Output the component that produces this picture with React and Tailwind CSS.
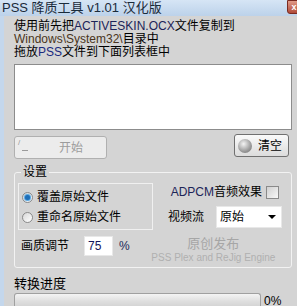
import React from 'react';

const font = { fontFamily: '"Liberation Sans", "Noto Sans CJK SC", sans-serif' };

function Radio({ checked, label }) {
  return (
    <div className="flex items-center h-[20px]">
      <span className="w-[11px] h-[11px] rounded-full border border-[#8a8a8a] bg-gradient-to-br from-[#d8d8d8] to-[#ffffff] flex items-center justify-center">
        {checked && <span className="w-[5px] h-[5px] rounded-full bg-[#1f6fb8] shadow-[0_0_1px_1px_#4aa0e0]" />}
      </span>
      <span className="ml-[4px] text-[12px] leading-[14px]">{label}</span>
    </div>
  );
}

export default function App() {
  return (
    <div className="w-[297px] h-[306px] overflow-hidden bg-[#d4d4d4] text-black" style={font}>
      {/* title bar */}
      <div className="h-[16px] flex items-start bg-gradient-to-b from-[#d6e5f5] to-[#bcd2ea] relative">
        <span className="ml-[2px] text-[13px] leading-[15px] text-[#1a2a3a] whitespace-nowrap">PSS 降质工具 v1.01 汉化版</span>
        <div className="absolute right-[-4px] top-0 w-[14px] h-[14px] bg-gradient-to-b from-[#e09a88] to-[#b04a38] border border-[#7a2a20] rounded-bl-[3px] flex items-center justify-center">
          <span className="text-white text-[9px] leading-none font-bold">x</span>
        </div>
      </div>

      <div className="flex h-[290px]">
        <div className="w-[4px] bg-[#c4d7ec]" />
        <div className="flex-1 pl-[10px] pr-[5px]">
          {/* instructions */}
          <div className="mt-[4px] text-[12px] leading-[13px] whitespace-nowrap">
            <div>使用前先把<span className="text-[#1c2458]">ACTIVESKIN.OCX</span>文件复制到</div>
            <div><span className="text-[#4a3420]">Windows\System32\</span>目录中</div>
            <div>拖放<span className="text-[#1a2a80]">PSS</span>文件到下面列表框中</div>
          </div>

          {/* list box */}
          <div className="mt-[5px] h-[66px] bg-white border border-[#8c8c8c]" />

          {/* buttons */}
          <div className="flex justify-between mt-[4px] pr-[3px]">
            <div className="mt-[2px] w-[93px] h-[23px] rounded-[3px] border border-[#b0b0b0] bg-[#ececec] flex items-center relative">
              <span className="absolute left-[3px] top-[2px] text-[8px] text-[#9a9a9a] leading-none">/</span>
              <span className="absolute left-[7px] top-[13px] w-[6px] h-[1px] bg-[#9a9a9a]" />
              <span className="ml-[44px] text-[12px] text-[#9c9c9c]">开始</span>
            </div>
            <div className="w-[55px] h-[23px] rounded-[3px] border border-[#707070] bg-gradient-to-b from-[#fafafa] to-[#dcdcdc] flex items-center">
              <span className="ml-[3px] w-[14px] h-[14px] rounded-full bg-[radial-gradient(circle_at_40%_35%,#f4f4f4,#9a9a9a_60%,#6a6a6a)]" />
              <span className="ml-[6px] text-[12px]">清空</span>
            </div>
          </div>

          {/* settings group */}
          <div className="mt-[13px] h-[96px] border border-[#f2f2f2] rounded-[3px] relative pl-[3px] pr-[10px]">
            <span className="absolute left-[6px] top-[-8px] px-[2px] bg-[#d4d4d4] text-[12px] leading-[14px]">设置</span>
            <div className="flex mt-[10px]">
              <div className="w-[135px] h-[47px] border border-[#f0f0f0] pl-[3px] pt-[3px] shrink-0">
                <Radio checked label="覆盖原始文件" />
                <Radio label="重命名原始文件" />
              </div>
              <div className="flex-1 flex flex-col items-end pt-[2px]">
                <div className="flex items-center pr-[2px]">
                  <span className="text-[12px] leading-[14px]"><span className="text-[#1c2458]">ADPCM</span>音频效果</span>
                  <span className="ml-[4px] w-[13px] h-[13px] border border-[#8a8a8a] bg-gradient-to-br from-[#d0d0d0] to-[#f8f8f8]" />
                </div>
                <div className="flex items-center mt-[7px] self-stretch pl-[15px] -mr-[4px]">
                  <span className="text-[12px] leading-[14px]">视频流</span>
                  <div className="ml-[12px] w-[66px] h-[22px] bg-white border border-[#e8e8e8] flex items-center justify-between px-[3px]">
                    <span className="text-[12px]">原始</span>
                    <span className="w-0 h-0 border-l-[4px] border-r-[4px] border-t-[4px] border-l-transparent border-r-transparent border-t-black mr-[2px]" />
                  </div>
                </div>
              </div>
            </div>
            <div className="flex mt-[6px]">
              <div className="flex items-center h-[20px] pl-[3px]">
                <span className="text-[12px]">画质调节</span>
                <div className="ml-[15px] w-[29px] h-[20px] bg-white border border-[#e8e8e8] flex items-center pl-[3px]">
                  <span className="text-[12px] text-[#14145a]">75</span>
                </div>
                <span className="ml-[6px] text-[12px] text-[#1a2a5a]">%</span>
              </div>
              <div className="flex-1 flex flex-col items-center ml-[16px]">
                <span className="text-[13px] leading-[16px] text-[#a6a6a6]">原创发布</span>
                <span className="text-[10px] leading-[12px] text-[#b0b0b0] whitespace-nowrap">PSS Plex and ReJig Engine</span>
              </div>
            </div>
          </div>

          {/* progress */}
          <div className="mt-[8px] text-[13px] leading-[15px]">转换进度</div>
          <div className="flex items-start mt-[2px]">
            <div className="w-[247px] h-[16px] rounded-t-[3px] border border-[#a0a0a0] border-b-0 bg-gradient-to-b from-[#f4f4f4] via-[#dedede] to-[#cfcfcf]" />
            <span className="ml-[3px] mt-[2px] text-[12px] leading-[12px]">0%</span>
          </div>
        </div>
      </div>
    </div>
  );
}
